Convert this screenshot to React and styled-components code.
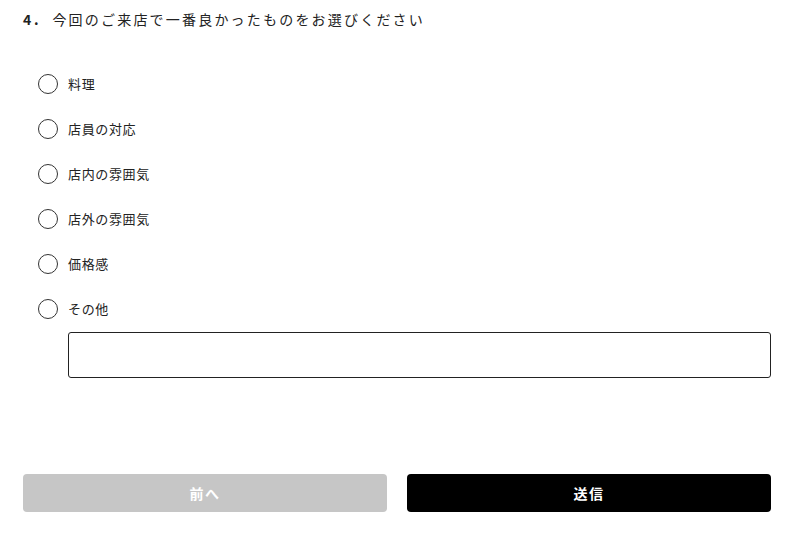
import React, { useState } from "react";
import styled, { createGlobalStyle } from "styled-components";

const GlobalStyle = createGlobalStyle`
  body {
    margin: 0;
    background: #fff;
    font-family: "Noto Sans CJK JP", "Noto Sans", sans-serif;
    color: #222;
  }
`;

const Page = styled.div`
  padding: 8px 26px 0 23px;
`;

const Title = styled.h2`
  margin: 0;
  font-size: 14px;
  font-weight: 400;
  line-height: 22px;
  letter-spacing: 2.2px;
  display: flex;
  align-items: center;
`;

const Num = styled.span`
  font-weight: 700;
  margin-right: 11px;
  letter-spacing: 0.2em;
`;

const Options = styled.div`
  margin-top: 31px;
  padding-left: 15px;
  display: flex;
  flex-direction: column;
`;

const Row = styled.label`
  height: 45px;
  display: flex;
  align-items: center;
  gap: 10px;
  cursor: pointer;
  font-size: 13px;
  letter-spacing: 0.05em;
`;

const Circle = styled.span`
  width: 20px;
  height: 20px;
  box-sizing: border-box;
  border-radius: 50%;
  border: 1.3px solid #333;
  display: flex;
  align-items: center;
  justify-content: center;
  &::after {
    content: "";
    width: 10px;
    height: 10px;
    border-radius: 50%;
    background: ${(p) => (p.checked ? "#000" : "transparent")};
  }
`;

const OtherInput = styled.input`
  display: block;
  margin: 1px 0 0 30px;
  width: calc(100% - 30px);
  height: 46px;
  box-sizing: border-box;
  border: 1px solid #222;
  border-radius: 3px;
  padding: 0 12px;
  font-size: 14px;
  font-family: inherit;
  outline: none;
`;

const Buttons = styled.div`
  margin-top: 96px;
  display: grid;
  grid-template-columns: 1fr 1fr;
  gap: 20px;
`;

const Button = styled.button`
  height: 38px;
  border: none;
  border-radius: 4px;
  background: ${(p) => (p.primary ? "#000" : "#c6c6c6")};
  color: #fff;
  font-family: inherit;
  font-size: 14px;
  font-weight: 700;
  letter-spacing: 0.1em;
  cursor: ${(p) => (p.primary ? "pointer" : "default")};
`;

const choices = ["料理", "店員の対応", "店内の雰囲気", "店外の雰囲気", "価格感", "その他"];

export default function App() {
  const [selected, setSelected] = useState(null);
  const [other, setOther] = useState("");

  return (
    <Page>
      <GlobalStyle />
      <Title>
        <Num>4.</Num>今回のご来店で一番良かったものをお選びください
      </Title>
      <Options>
        {choices.map((c) => (
          <Row key={c} onClick={() => setSelected(c)}>
            <Circle checked={selected === c} />
            {c}
          </Row>
        ))}
        <OtherInput value={other} onChange={(e) => setOther(e.target.value)} />
      </Options>
      <Buttons>
        <Button>前へ</Button>
        <Button primary>送信</Button>
      </Buttons>
    </Page>
  );
}
